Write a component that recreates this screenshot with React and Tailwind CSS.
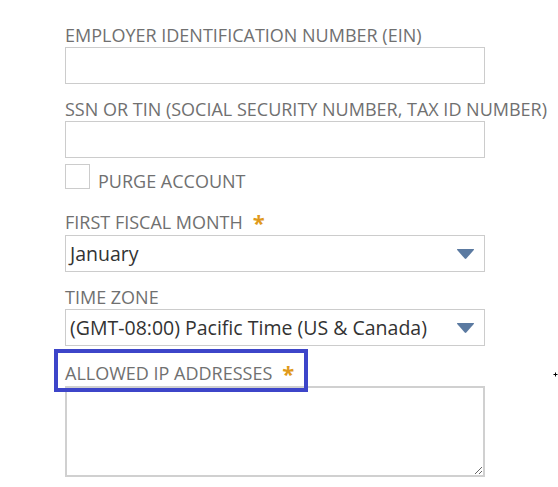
import React from 'react';

const font = { fontFamily: '"Open Sans", "Noto Sans", sans-serif' };

function Label({ children, required }) {
  return (
    <div className="flex items-start h-[22px] text-[18px] leading-[22px] text-[#707070] whitespace-nowrap">
      <span>{children}</span>
      {required && <span className="ml-[10px] text-[22px] leading-[22px] font-bold text-[#e09a1c]">*</span>}
    </div>
  );
}

function TextInput() {
  return <div className="h-[37px] w-[420px] border border-[#cccccc] bg-white" />;
}

function Select({ value }) {
  return (
    <div className="h-[37px] w-[420px] border border-[#cccccc] bg-white flex items-center justify-between pl-[4px] pr-[9px]">
      <span className="text-[19.5px] leading-[24px] text-[#333333] whitespace-nowrap">{value}</span>
      <svg width="19" height="12" viewBox="0 0 19 12">
        <path d="M1.5 1 H17.5 Q18.5 1 17.8 2 L10.3 10.6 Q9.5 11.4 8.7 10.6 L1.2 2 Q0.5 1 1.5 1 Z" fill="#5b7aa1" />
      </svg>
    </div>
  );
}

export default function App() {
  return (
    <div className="relative w-[558px] h-[487px] bg-white overflow-hidden" style={font}>
      <div className="flex flex-col pl-[65px] pt-[24px]">
        <Label>EMPLOYER IDENTIFICATION NUMBER (EIN)</Label>
        <div className="mt-px"><TextInput /></div>

        <div className="mt-[14px]"><Label>SSN OR TIN (SOCIAL SECURITY NUMBER, TAX ID NUMBER)</Label></div>
        <div className="mt-px"><TextInput /></div>

        <div className="mt-[6px] flex items-end gap-[8px]">
          <div className="w-[25px] h-[25px] border border-[#cccccc] bg-white" />
          <span className="text-[18px] leading-[22px] text-[#707070] -mb-[3px] whitespace-nowrap">PURGE ACCOUNT</span>
        </div>

        <div className="mt-[22px]"><Label required>FIRST FISCAL MONTH</Label></div>
        <div className="mt-[2px]"><Select value="January" /></div>

        <div className="mt-[14px]"><Label>TIME ZONE</Label></div>
        <div className="mt-px"><Select value="(GMT-08:00) Pacific Time (US & Canada)" /></div>

        <div className="mt-[16px] relative">
          <Label required>ALLOWED IP ADDRESSES</Label>
          <div className="absolute left-[-11px] top-[-13px] w-[254px] h-[43px] border-4 border-[#3d45c9] pointer-events-none" />
        </div>
        <textarea className="mt-[2px] w-[420px] h-[91px] border-2 border-[#d0d0d0] bg-white outline-none" />
      </div>
      <svg className="absolute left-[553px] top-[372px]" width="5" height="5" viewBox="0 0 5 5">
        <path d="M2.5 0.5 V4.5 M0.5 2.5 H4.5" stroke="#000" strokeWidth="1" />
      </svg>
    </div>
  );
}
